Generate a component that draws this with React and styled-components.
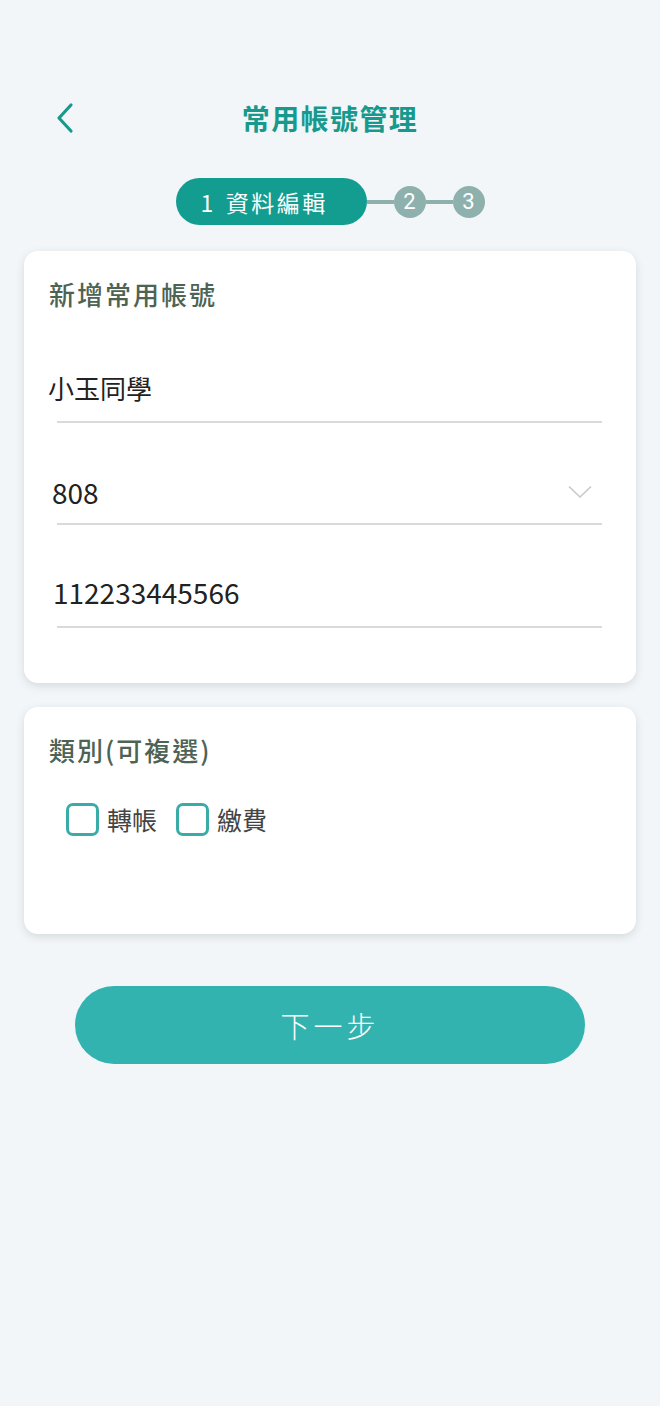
import React, { useState } from "react";
import styled, { createGlobalStyle } from "styled-components";

const GlobalStyle = createGlobalStyle`
  html, body {
    margin: 0;
    padding: 0;
    background: #f3f6f9;
    font-family: "Noto Sans CJK TC", "Noto Sans", sans-serif;
  }
`;

const Page = styled.div`
  min-height: 1406px;
  background: #f3f6f9;
  padding: 88px 24px 0 24px;
  box-sizing: border-box;
`;

const Header = styled.div`
  display: grid;
  grid-template-columns: 60px 1fr 60px;
  align-items: center;
  height: 60px;
`;

const Back = styled.button`
  border: 0;
  background: none;
  padding: 0 0 0 31px;
  display: flex;
  align-items: center;
  cursor: pointer;
`;

const Title = styled.h1`
  margin: 0;
  text-align: center;
  font-size: 28px;
  font-weight: 700;
  color: #179a8d;
  letter-spacing: 1.4px;
`;

const Stepper = styled.div`
  display: flex;
  align-items: center;
  justify-content: center;
  margin: 30px 0 26px 0;
`;

const ActiveStep = styled.div`
  height: 47px;
  width: 191px;
  border-radius: 24px;
  background: #139d91;
  color: #fff;
  display: flex;
  align-items: center;
  padding-left: 25px;
  box-sizing: border-box;
  font-size: 23px;
  letter-spacing: 2.5px;
  gap: 10px;
`;

const Connector = styled.div`
  width: 27px;
  height: 4px;
  background: #8fb1ad;
`;

const StepDot = styled.div`
  width: 32px;
  height: 32px;
  border-radius: 50%;
  background: #8fb1ad;
  color: #fff;
  font-family: "Roboto", "Noto Sans", sans-serif;
  font-size: 22px;
  display: flex;
  align-items: center;
  justify-content: center;
`;

const Card = styled.section`
  background: #fff;
  border-radius: 14px;
  box-shadow: 0 3px 8px rgba(60, 80, 80, 0.16);
  padding: 25px 34px 0 24px;
  height: ${(p) => p.$height}px;
  box-sizing: border-box;
  margin-bottom: 24px;
`;

const CardTitle = styled.h2`
  margin: 0 0 0 1px;
  font-size: 26px;
  line-height: 36px;
  font-weight: 500;
  color: #4d6354;
  letter-spacing: 2px;
`;

const Field = styled.div`
  margin-top: ${(p) => p.$top}px;
  display: flex;
  flex-direction: column;
`;

const ValueRow = styled.div`
  display: flex;
  align-items: center;
  justify-content: space-between;
  padding-left: ${(p) => p.$indent}px;
  height: 36px;
  font-size: ${(p) => (p.$digits ? 28 : 26)}px;
  color: #222;
`;

const Rule = styled.div`
  margin: ${(p) => p.$gap}px 0 0 9px;
  height: 2px;
  background: #dadada;
`;

const Chevron = styled.svg`
  margin-right: 10px;
`;

const Options = styled.div`
  display: flex;
  align-items: center;
  margin: 33px 0 0 18px;
`;

const Option = styled.label`
  display: flex;
  align-items: center;
  gap: 8px;
  margin-right: 19px;
  font-size: 25px;
  color: #444;
  cursor: pointer;
`;

const Box = styled.span`
  width: 33px;
  height: 33px;
  box-sizing: border-box;
  border: 3px solid #3aaca7;
  border-radius: 7px;
  background: ${(p) => (p.$on ? "#3aaca7" : "#fff")};
`;

const NextButton = styled.button`
  display: block;
  width: 510px;
  height: 78px;
  margin: 52px auto 0 auto;
  border: 0;
  border-radius: 39px;
  background: #33b3b0;
  color: #fff;
  font-family: "Noto Sans CJK TC", sans-serif;
  font-size: 29px;
  font-weight: 300;
  letter-spacing: 4px;
  cursor: pointer;
`;

const fields = [
  { value: "小玉同學", top: 57, gap: 16, indent: 0 },
  { value: "808", top: 51, gap: 13, indent: 4, digits: true, select: true },
  { value: "112233445566", top: 49, gap: 16, indent: 5, digits: true },
];

const App = () => {
  const [checked, setChecked] = useState({ 轉帳: false, 繳費: false });

  return (
    <Page>
      <GlobalStyle />
      <Header>
        <Back aria-label="back">
          <svg width="20" height="32" viewBox="0 0 20 32">
            <path d="M16 3 L4 16 L16 29" fill="none" stroke="#179a8d" strokeWidth="3.2" strokeLinecap="round" strokeLinejoin="round" />
          </svg>
        </Back>
        <Title>常用帳號管理</Title>
        <div />
      </Header>

      <Stepper>
        <ActiveStep>
          <span>1</span>
          <span>資料編輯</span>
        </ActiveStep>
        <Connector />
        <StepDot>2</StepDot>
        <Connector />
        <StepDot>3</StepDot>
      </Stepper>

      <Card $height={432}>
        <CardTitle>新增常用帳號</CardTitle>
        {fields.map((f) => (
          <Field key={f.value} $top={f.top}>
            <ValueRow $indent={f.indent} $digits={f.digits}>
              <span>{f.value}</span>
              {f.select && (
                <Chevron width="24" height="14" viewBox="0 0 24 14">
                  <path d="M1 1.5 L12 12 L23 1.5" fill="none" stroke="#c8c8c8" strokeWidth="1.6" />
                </Chevron>
              )}
            </ValueRow>
            <Rule $gap={f.gap} />
          </Field>
        ))}
      </Card>

      <Card $height={227}>
        <CardTitle>類別(可複選)</CardTitle>
        <Options>
          {Object.keys(checked).map((k) => (
            <Option key={k} onClick={() => setChecked({ ...checked, [k]: !checked[k] })}>
              <Box $on={checked[k]} />
              {k}
            </Option>
          ))}
        </Options>
      </Card>

      <NextButton>下一步</NextButton>
    </Page>
  );
};

export default App;
